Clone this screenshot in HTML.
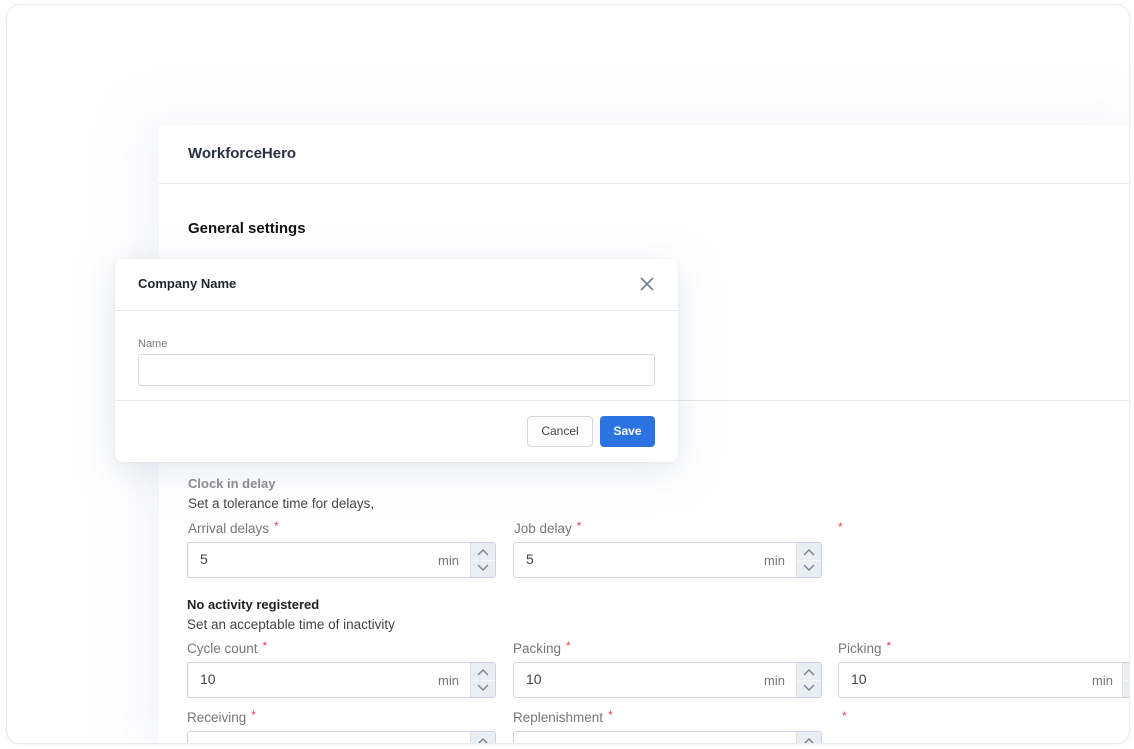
<!DOCTYPE html>
<html><head><meta charset="utf-8"><style>
*{box-sizing:border-box;margin:0;padding:0}
html,body{width:1134px;height:749px;overflow:hidden}
body{background:#fff;font-family:"Liberation Sans",sans-serif;position:relative}
.card{position:absolute;left:6px;top:4px;width:1124px;height:740px;border:1px solid #ececef;border-radius:14px;background:#fff;overflow:hidden;box-shadow:0 1px 3px rgba(0,0,0,.05)}
.panel{position:absolute;left:152px;top:120px;width:1000px;height:640px;background:#fff;box-shadow:-20px -10px 40px rgba(215,220,232,.25)}
.abs{position:absolute}
.t{position:absolute;white-space:nowrap}
.hl{position:absolute;height:1px;background:#e6e7ea}
.inp{position:absolute;height:36px;border:1px solid #cfd2e0;border-radius:3px;background:#fff;overflow:hidden}
.inp .v{position:absolute;left:12px;top:8px;font-size:14px;color:#444}
.inp .m{position:absolute;right:36px;top:10px;font-size:13px;color:#777}
.inp .sp{position:absolute;right:0;top:0;width:25px;height:34px;background:#e9edf4;border-left:1px solid #dde1ea}
.inp .sp:after{content:"";position:absolute;left:0;right:0;top:17px;height:1px;background:#f6f7fa}
.lbl{position:absolute;font-size:13.5px;color:#777;white-space:nowrap}
.lbl b{color:#d9484f;font-weight:normal;font-size:12px;position:relative;top:-3px;margin-left:5px}
.star{position:absolute;color:#d9484f;font-size:12px}
</style></head><body>
<div class="card">
<div class="panel">
 <div class="t" style="left:29px;top:20px;font-size:15px;font-weight:bold;color:#2a3140">WorkforceHero</div>
 <div class="hl" style="left:0;top:58px;width:1000px"></div>
 <div class="t" style="left:29px;top:95px;font-size:15px;font-weight:bold;color:#111">General settings</div>
 <div class="hl" style="left:0;top:275px;width:1000px"></div>
 <div class="t" style="left:29px;top:351px;font-size:13px;font-weight:bold;color:#888">Clock in delay</div>
 <div class="t" style="left:29px;top:371px;font-size:13.5px;color:#444">Set a tolerance time for delays,</div>
 <div class="lbl" style="left:29px;top:396px">Arrival delays<b>*</b></div>
 <div class="lbl" style="left:355px;top:396px">Job delay<b>*</b></div>
 <div class="star" style="left:679px;top:395px">*</div>
</div>
</div>

<div class="inp" style="left:187px;top:542px;width:309px"><span class="v">5</span><span class="m">min</span><div class="sp"><svg width="25" height="34"><path d="M7 12l5-5 5 5M7 22l5 5 5-5" fill="none" stroke="#7b8091" stroke-width="1.4"/></svg></div></div>
<div class="inp" style="left:513px;top:542px;width:309px"><span class="v">5</span><span class="m">min</span><div class="sp"><svg width="25" height="34"><path d="M7 12l5-5 5 5M7 22l5 5 5-5" fill="none" stroke="#7b8091" stroke-width="1.4"/></svg></div></div>

<div class="t" style="left:187px;top:597px;font-size:13px;font-weight:bold;color:#222">No activity registered</div>
<div class="t" style="left:187px;top:617px;font-size:13.5px;color:#444">Set an acceptable time of inactivity</div>
<div class="lbl" style="left:187px;top:641px">Cycle count<b>*</b></div>
<div class="lbl" style="left:513px;top:641px">Packing<b>*</b></div>
<div class="lbl" style="left:838px;top:641px">Picking<b>*</b></div>
<div class="inp" style="left:187px;top:662px;width:309px"><span class="v">10</span><span class="m">min</span><div class="sp"><svg width="25" height="34"><path d="M7 12l5-5 5 5M7 22l5 5 5-5" fill="none" stroke="#7b8091" stroke-width="1.4"/></svg></div></div>
<div class="inp" style="left:513px;top:662px;width:309px"><span class="v">10</span><span class="m">min</span><div class="sp"><svg width="25" height="34"><path d="M7 12l5-5 5 5M7 22l5 5 5-5" fill="none" stroke="#7b8091" stroke-width="1.4"/></svg></div></div>
<div class="inp" style="left:838px;top:662px;width:291px;border-right:none;border-radius:3px 0 0 3px"><span class="v">10</span><span class="m" style="right:16px">min</span><div class="sp" style="right:0;width:7px"></div></div>
<div class="lbl" style="left:187px;top:710px">Receiving<b>*</b></div>
<div class="lbl" style="left:513px;top:710px">Replenishment<b>*</b></div>
<div class="star" style="left:842px;top:709px">*</div>
<div class="inp" style="left:187px;top:731px;width:309px;height:12px;border-bottom:none;border-radius:3px 3px 0 0"><div class="sp" style="height:11px"><svg width="25" height="11"><path d="M7 10l5-5 5 5" fill="none" stroke="#7b8091" stroke-width="1.4"/></svg></div></div>
<div class="inp" style="left:513px;top:731px;width:309px;height:12px;border-bottom:none;border-radius:3px 3px 0 0"><div class="sp" style="height:11px"><svg width="25" height="11"><path d="M7 10l5-5 5 5" fill="none" stroke="#7b8091" stroke-width="1.4"/></svg></div></div>

<div class="abs" style="left:115px;top:259px;width:563px;height:203px;background:#fff;border-radius:8px;box-shadow:0 8px 40px rgba(180,188,205,.35),0 1px 3px rgba(0,0,0,.06)">
 <div class="t" style="left:23px;top:17px;font-size:13px;font-weight:bold;color:#1f2530">Company Name</div>
 <svg class="abs" style="left:525px;top:18px" width="14" height="14"><path d="M1 1l12 12M13 1L1 13" stroke="#737a8a" stroke-width="1.6"/></svg>
 <div class="hl" style="left:0;top:51px;width:563px"></div>
 <div class="t" style="left:23px;top:79px;font-size:11px;color:#777">Name</div>
 <div class="abs" style="left:23px;top:95px;width:517px;height:32px;border:1px solid #d7d9e0;border-radius:3px"></div>
 <div class="hl" style="left:0;top:141px;width:563px"></div>
 <div class="abs" style="left:412px;top:157px;width:66px;height:31px;border:1px solid #d6d8de;border-radius:4px;font-size:12px;color:#444;text-align:center;line-height:29px;background:#fcfcfd">Cancel</div>
 <div class="abs" style="left:485px;top:157px;width:55px;height:31px;border-radius:4px;background:#2b74e0;color:#fff;font-size:12px;font-weight:bold;text-align:center;line-height:31px">Save</div>
</div>
</body></html>
